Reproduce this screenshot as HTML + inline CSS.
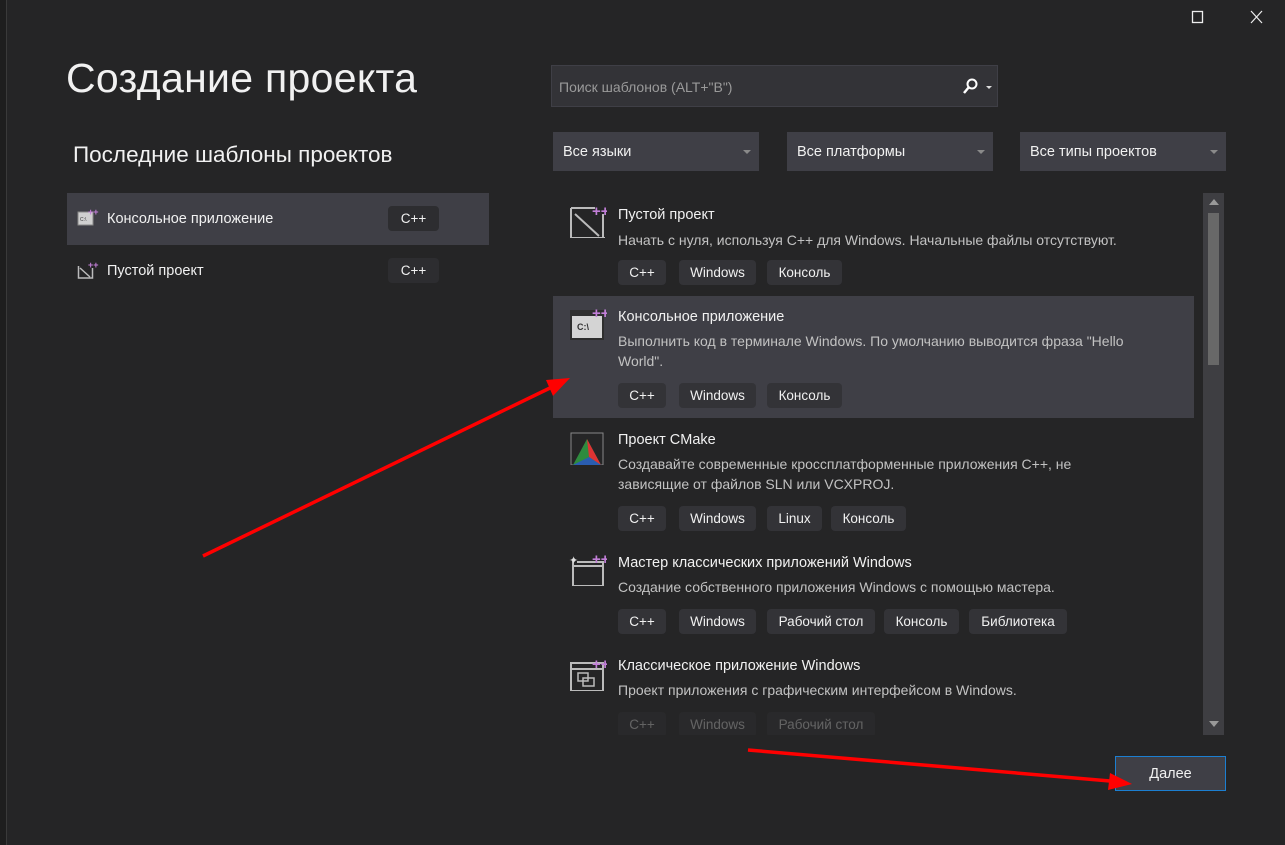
<!DOCTYPE html>
<html><head><meta charset="utf-8"><style>
*{margin:0;padding:0;box-sizing:border-box}
body{width:1285px;height:845px;background:#252526;font-family:"Liberation Sans","Noto Sans CJK SC",sans-serif;color:#f1f1f1;position:relative;overflow:hidden}
.a{position:absolute}
.strip{left:0;top:0;width:7px;height:845px;background:#1e1e1e;border-right:1px solid #3a3a3a}
.t{font-size:41px;left:66px;top:55px;color:#f1f1f1;letter-spacing:0.3px}
.st{font-size:22.5px;left:73px;top:142px}
.row{left:67px;width:422px;height:52px}
.row .lbl{position:absolute;left:40px;top:18px;font-size:14.5px}
.tag{position:absolute;height:25px;background:#333337;border-radius:4px;font-size:13.5px;line-height:25px;text-align:center;color:#f1f1f1}
.sel{background:#3f3f46}
.search{left:551px;top:65px;width:447px;height:42px;background:#333337;border:1px solid #3f3f46}
.search span{position:absolute;left:7px;top:13px;font-size:14px;color:#9a9a9a}
.dd{top:132px;height:39px;width:206px;background:#3f3f46;font-size:14.5px;line-height:41px;padding-left:10px}
.dd:after{content:"";position:absolute;right:8px;top:18px;border:4px solid transparent;border-top:4px solid #8a8a8a;border-bottom:0}
.item{left:553px;width:641px}
.ic{position:absolute;left:16px;width:38px;height:34px}
.tt{position:absolute;left:65px;font-size:14.5px}
.ds{position:absolute;left:65px;font-size:14px;color:#c2c2c2;line-height:20px;width:530px}
</style></head><body>
<div class="a strip"></div>
<div class="a t">Создание проекта</div>
<div class="a st">Последние шаблоны проектов</div>

<div class="a row sel" style="top:193px">
<svg class="a" style="left:10px;top:15px" width="22" height="20"><rect x="1" y="4" width="15" height="13" fill="#d0d0d0" stroke="#888"/><text x="3" y="13" font-size="5" fill="#333">C:\</text><text x="11" y="7" font-size="9" font-weight="bold" fill="#c27fd8">++</text></svg>
<span class="lbl">Консольное приложение</span>
<div class="tag" style="left:321px;top:13px;width:51px;background:#2d2d30">C++</div></div>
<div class="a row" style="top:245px">
<svg class="a" style="left:10px;top:16px" width="22" height="20"><path d="M1.5 5v12h14V7M3 7l10 9" stroke="#bbb" fill="none" stroke-width="1.5"/><text x="11" y="7" font-size="9" font-weight="bold" fill="#c27fd8">++</text></svg>
<span class="lbl">Пустой проект</span>
<div class="tag" style="left:321px;top:13px;width:51px;background:#2d2d30">C++</div></div>

<div class="a search"><span>Поиск шаблонов (ALT+"В")</span>
<svg class="a" style="left:410px;top:12px" width="34" height="18"><circle cx="10" cy="6" r="4.5" stroke="#fff" stroke-width="2" fill="none"/><path d="M7 9l-5 6" stroke="#fff" stroke-width="2.5"/><path d="M24 8h6l-3 3z" fill="#ddd"/></svg></div>

<div class="a dd" style="left:553px">Все языки</div>
<div class="a dd" style="left:787px">Все платформы</div>
<div class="a dd" style="left:1020px">Все типы проектов</div>

<div class="a" style="left:1203px;top:193px;width:21px;height:542px;background:#3e3e42"></div>
<div class="a" style="left:1208px;top:213px;width:11px;height:152px;background:#686868"></div>
<svg class="a" style="left:1207px;top:197px" width="14" height="10"><path d="M2 8h10L7 2z" fill="#999"/></svg>
<svg class="a" style="left:1207px;top:719px" width="14" height="10"><path d="M2 2h10L7 8z" fill="#999"/></svg>

<div class="a item" style="top:196px;height:97px">
<svg class="ic" style="top:8px"><path d="M2 4v30h32V10M6 10l24 22M2 34h34" stroke="#bbb" fill="none" stroke-width="2"/><path d="M2 4h24" stroke="#bbb" stroke-width="2"/><text x="23" y="12" font-size="15" font-weight="bold" fill="#c27fd8">++</text></svg>
<div class="tt" style="top:11px">Пустой проект</div>
<div class="ds" style="top:34px">Начать с нуля, используя C++ для Windows. Начальные файлы отсутствуют.</div>
<div class="tag" style="left:65px;top:64px;width:48px">C++</div><div class="tag" style="left:126px;top:64px;width:77px">Windows</div><div class="tag" style="left:214px;top:64px;width:75px">Консоль</div></div>

<div class="a item sel" style="top:296px;height:122px">
<svg class="ic" style="top:10px"><rect x="1" y="4" width="34" height="30" fill="#2e2e2e"/><rect x="3" y="10" width="30" height="22" fill="#d4d4d4"/><text x="8" y="24" font-size="9" fill="#333" font-weight="bold">C:\</text><text x="23" y="12" font-size="15" font-weight="bold" fill="#c27fd8">++</text></svg>
<div class="tt" style="top:13px">Консольное приложение</div>
<div class="ds" style="top:35px">Выполнить код в терминале Windows. По умолчанию выводится фраза "Hello World".</div>
<div class="tag" style="left:65px;top:87px;width:48px">C++</div><div class="tag" style="left:126px;top:87px;width:77px">Windows</div><div class="tag" style="left:214px;top:87px;width:75px">Консоль</div></div>

<div class="a item" style="top:419px;height:122px">
<svg class="ic" style="top:12px"><rect x="2" y="2" width="32" height="32" fill="none" stroke="#888"/><path d="M4 34L18 8l14 26z" fill="#2e8b3e"/><path d="M18 8l14 26L20 26z" fill="#d33"/><path d="M4 34l16-8 12 8z" fill="#2a5db0"/></svg>
<div class="tt" style="top:13px">Проект CMake</div>
<div class="ds" style="top:35px;width:475px">Создавайте современные кроссплатформенные приложения C++, не зависящие от файлов SLN или VCXPROJ.</div>
<div class="tag" style="left:65px;top:87px;width:48px">C++</div><div class="tag" style="left:126px;top:87px;width:77px">Windows</div><div class="tag" style="left:214px;top:87px;width:55px">Linux</div><div class="tag" style="left:278px;top:87px;width:75px">Консоль</div></div>

<div class="a item" style="top:542px;height:97px">
<svg class="ic" style="top:10px"><path d="M4 8v26h30V10H8" stroke="#bbb" fill="none" stroke-width="2"/><path d="M4 14h30" stroke="#bbb" stroke-width="2"/><text x="0" y="12" font-size="11" fill="#ddd">✦</text><text x="23" y="12" font-size="15" font-weight="bold" fill="#c27fd8">++</text></svg>
<div class="tt" style="top:13px">Мастер классических приложений Windows</div>
<div class="ds" style="top:35px">Создание собственного приложения Windows с помощью мастера.</div>
<div class="tag" style="left:65px;top:67px;width:48px">C++</div><div class="tag" style="left:126px;top:67px;width:77px">Windows</div><div class="tag" style="left:214px;top:67px;width:108px">Рабочий стол</div><div class="tag" style="left:331px;top:67px;width:75px">Консоль</div><div class="tag" style="left:416px;top:67px;width:98px">Библиотека</div></div>

<div class="a item" style="top:645px;height:90px;overflow:hidden">
<svg class="ic" style="top:12px"><rect x="2" y="6" width="32" height="28" fill="none" stroke="#bbb" stroke-width="2"/><path d="M2 12h32" stroke="#bbb" stroke-width="2"/><rect x="9" y="16" width="10" height="8" fill="none" stroke="#bbb" stroke-width="1.5"/><rect x="14" y="21" width="11" height="8" fill="none" stroke="#bbb" stroke-width="1.5"/><text x="23" y="12" font-size="15" font-weight="bold" fill="#c27fd8">++</text></svg>
<div class="tt" style="top:13px">Классическое приложение Windows</div>
<div class="ds" style="top:35px">Проект приложения с графическим интерфейсом в Windows.</div>
<div style="opacity:.3"><div class="tag" style="left:65px;top:67px;width:48px">C++</div><div class="tag" style="left:126px;top:67px;width:77px">Windows</div><div class="tag" style="left:214px;top:67px;width:108px">Рабочий стол</div></div></div>

<div class="a" style="left:1115px;top:756px;width:111px;height:35px;background:#3f3f46;border:1px solid #1c7fd1;font-size:14.5px;line-height:35px;text-align:center">Далее</div>

<svg class="a" style="left:1190px;top:8px" width="80" height="20"><rect x="2.5" y="3.5" width="10" height="11" fill="none" stroke="#eee" stroke-width="1.3"/><path d="M61 3l11 12M72 3L61 15" stroke="#eee" stroke-width="1.2"/></svg>

<svg class="a" style="left:0;top:0" width="1285" height="845">
<path d="M203 556L550 388" stroke="#f00" stroke-width="3.5"/><path d="M570 378L546 380L553 396z" fill="#f00"/>
<path d="M748 750L1110 781" stroke="#f00" stroke-width="3.5"/><path d="M1132 784L1110 773L1108 790z" fill="#f00"/>
</svg>
</body></html>
